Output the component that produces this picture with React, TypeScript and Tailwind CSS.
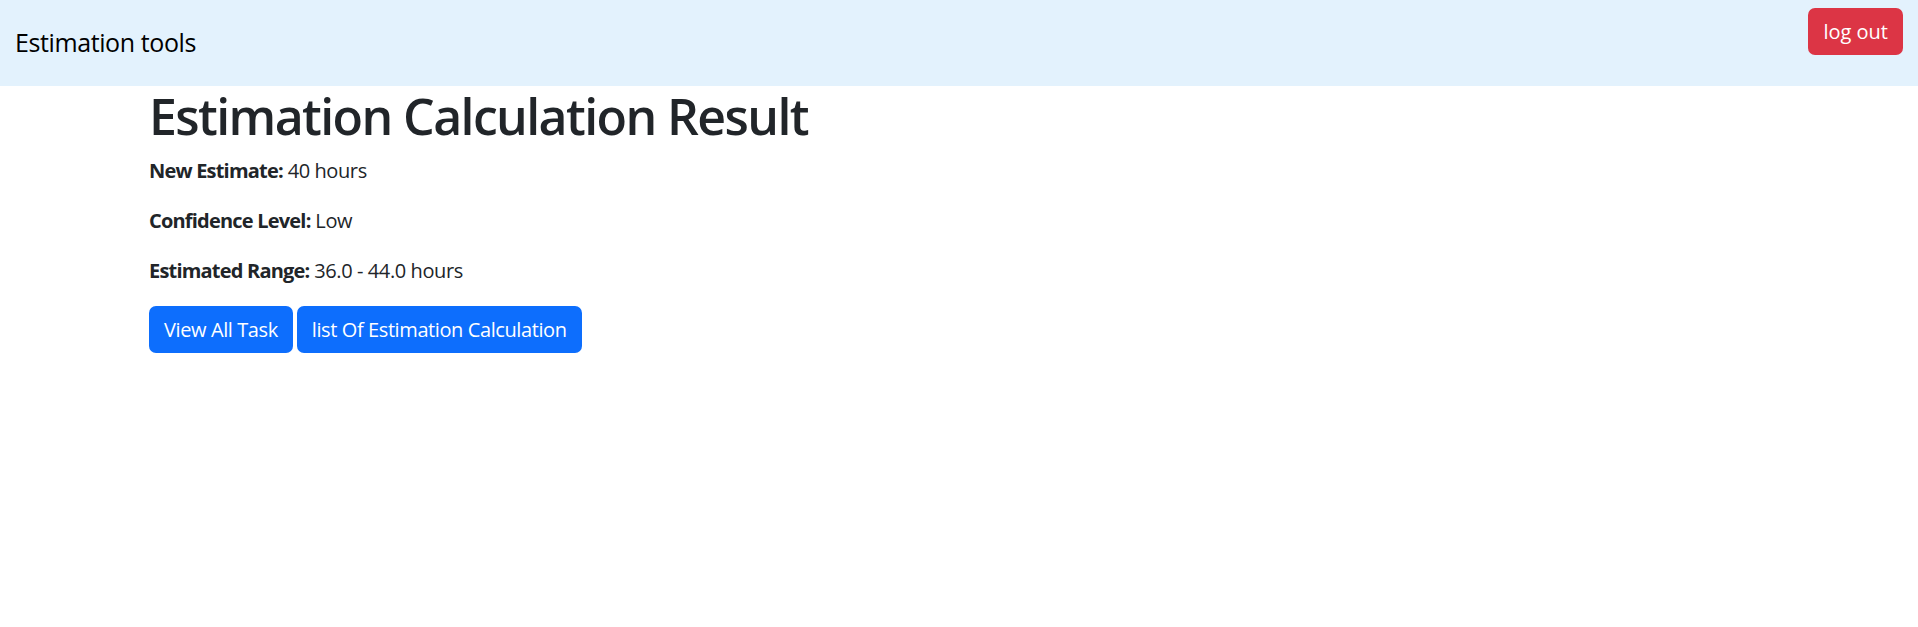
import React from "react";

const rows = [
  { label: "New Estimate:", value: "40 hours" },
  { label: "Confidence Level:", value: "Low" },
  { label: "Estimated Range:", value: "36.0 - 44.0 hours" },
];

const App = () => {
  return (
    <div className="min-h-screen bg-white text-[#212529] font-['Open_Sans',sans-serif] tracking-[-0.4px]">
      <nav className="flex justify-between h-[86px] px-[15px] bg-[#e3f2fd]">
        <a href="./" className="self-center text-[25px] text-black tracking-[-0.4px]">
          Estimation tools
        </a>
        <button className="mt-[8px] h-[47px] px-[15px] rounded-[7px] bg-[#dc3545] text-white text-[20px] tracking-normal">
          log out
        </button>
      </nav>
      <div className="w-[1650px] mx-auto px-[15px]">
        <h1 className="text-[50px] leading-[60px] font-semibold tracking-[-1.6px] mb-[10px]">
          Estimation Calculation Result
        </h1>
        {rows.map((el, index) => (
          <p key={index} className="text-[20px] leading-[30px] mb-[20px]">
            <strong className="font-bold tracking-[-0.8px]">{el.label}</strong> {el.value}
          </p>
        ))}
        <div className="flex gap-[4px]">
          <button className="h-[47px] px-[15px] rounded-[7px] bg-[#0d6efd] text-white text-[20px]">
            View All Task
          </button>
          <button className="h-[47px] px-[15px] rounded-[7px] bg-[#0d6efd] text-white text-[20px]">
            list Of Estimation Calculation
          </button>
        </div>
      </div>
    </div>
  );
};

export default App;
